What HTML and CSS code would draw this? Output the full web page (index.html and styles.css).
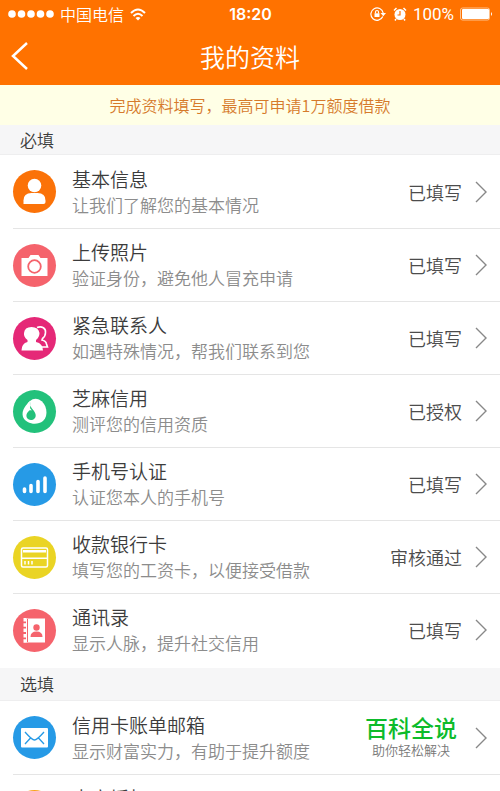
FILE: index.html
```html
<!DOCTYPE html>
<html lang="zh-CN">
<head>
  <meta charset="utf-8">
  <meta name="viewport" content="width=device-width, initial-scale=1">
  <link rel="stylesheet" href="styles.css">
  <title>我的资料</title>
</head>
<body>
  <div class="app">
    <header class="header">
      <div class="status">
        <div class="status-left">
          <svg width="46" height="10" viewBox="0 0 46 10" fill="#fff"><circle cx="4" cy="5" r="3.800"/><circle cx="13.500" cy="5" r="3.800"/><circle cx="23" cy="5" r="3.800"/><circle cx="32.500" cy="5" r="3.800"/><circle cx="42" cy="5" r="3.800"/></svg>
          <span>中国电信</span>
          <svg width="16" height="13" viewBox="0 0 16 13" fill="none" stroke="#fff" stroke-width="2"><path d="M1 5Q8-2 15 5M3.500 8Q8 3.500 12.500 8"/><path d="M8 12.500L5.500 10Q8 7.800 10.500 10z" fill="#fff" stroke="none"/></svg>
        </div>
        <span class="clock">18:20</span>
        <div class="status-right">
          <svg width="17" height="14" viewBox="0 0 17 14" fill="none" stroke="#fff" stroke-width="1.200"><path d="M12.800 9.500A6.200 6.200 0 1 1 13.200 6"/><path d="M10.500 6h5.500l-2.700 3.200z" fill="#fff" stroke="none"/><path d="M4.500 6.300h5V10h-5z" fill="#fff" stroke="none"/><path d="M5.500 6.500V5a1.500 1.500 0 0 1 3 0v1.500"/></svg>
          <svg width="14" height="14" viewBox="0 0 14 14"><circle cx="7" cy="7.500" r="5.500" fill="#fff"/><path d="M1 3.500L3.500 1M13 3.500L10.500 1M3 12l-1 1.500M11 12l1 1.500" stroke="#fff" stroke-width="1.500"/><path d="M7 4v4H4.500" fill="none" stroke="#ff7200" stroke-width="1.200"/></svg>
          <span class="percent">100%</span>
          <svg width="33" height="14" viewBox="0 0 33 14" fill="#fff"><rect x=".5" y="1" width="29" height="12" rx="2" fill="none" stroke="#ffc18b"/><rect x="2" y="2" width="27" height="10" rx="1"/><path d="M31 5q2 2 0 4z"/></svg>
        </div>
      </div>
      <div class="nav">
        <a class="back" href="#" aria-label="返回"><svg width="18" height="30" viewBox="0 0 18 30" fill="none" stroke="#fff" stroke-width="2.500"><path d="M16 2L2 15l14 13"/></svg></a>
        <h1>我的资料</h1>
      </div>
    </header>
    <p class="notice">完成资料填写，最高可申请1万额度借款</p>

    <h2 class="section">必填</h2>
    <ul class="list">
      <li><a class="row" href="#">
        <svg class="icon orange" viewBox="0 0 43 43"><circle cx="21.500" cy="15.500" r="6.800" fill="#fff"/><path d="M10.500 34v-3.500q0-7.500 8-7.500h6q8 0 8 7.500V32q0 2-2 2z" fill="#fff"/></svg>
        <span class="text"><span class="name">基本信息</span><span class="desc">让我们了解您的基本情况</span></span>
        <span class="state">已填写</span>
        <svg class="arrow" viewBox="0 0 12 22"><path d="M1 1l10 10L1 21"/></svg>
      </a></li>
      <li><a class="row" href="#">
        <svg class="icon coral" viewBox="0 0 43 43"><path d="M8.500 14h7l2-3h8l2 3h7v18h-26z" fill="#fff"/><circle cx="21.500" cy="22.500" r="6.300" fill="#fff" stroke="#f5636c" stroke-width="1.800"/></svg>
        <span class="text"><span class="name">上传照片</span><span class="desc">验证身份，避免他人冒充申请</span></span>
        <span class="state">已填写</span>
        <svg class="arrow" viewBox="0 0 12 22"><path d="M1 1l10 10L1 21"/></svg>
      </a></li>
      <li><a class="row" href="#">
        <svg class="icon pink" viewBox="0 0 43 43"><path d="M24 10.500c5-2 9 1 8.500 5 0 3-1 4.500-3 6l-.5 1.500q4 1 4.500 4l1 3h-6" fill="none" stroke="#fff" stroke-width="1.600"/><path d="M8.500 33.500q0-7 6-8.500v-2q-4-3-3.500-7 .5-6 7.500-6t8 6q0 4-3.500 7v2q7 1.500 7 8.500z" fill="#fff"/></svg>
        <span class="text"><span class="name">紧急联系人</span><span class="desc">如遇特殊情况，帮我们联系到您</span></span>
        <span class="state">已填写</span>
        <svg class="arrow" viewBox="0 0 12 22"><path d="M1 1l10 10L1 21"/></svg>
      </a></li>
      <li><a class="row" href="#">
        <svg class="icon green" viewBox="0 0 43 43"><path d="M17 11Q21 7.500 26 9.500c8 4 10 16 4 21.500-6 5-17 3-20-4-2-7 3-12 7-16z" fill="#fff"/><path d="M17 11c-1 7 4 8 5.500 13 1 4-2 6-4.500 6-4 0-6-4.500-3.500-7.500 3-3 3-5 2.500-11.500z" fill="#23c17b"/><path d="M17 10.500c-2 5-.5 7.500 2 10-3-1-6 1-6 4-2-3 0-10 4-14z" fill="#fff"/></svg>
        <span class="text"><span class="name">芝麻信用</span><span class="desc">测评您的信用资质</span></span>
        <span class="state">已授权</span>
        <svg class="arrow" viewBox="0 0 12 22"><path d="M1 1l10 10L1 21"/></svg>
      </a></li>
      <li><a class="row" href="#">
        <svg class="icon blue" viewBox="0 0 43 43" stroke="#fff" stroke-width="3.600" stroke-linecap="round"><path d="M11.500 26v2.500M18 22.500v6M25 18.500v10M32 15v13.500"/></svg>
        <span class="text"><span class="name">手机号认证</span><span class="desc">认证您本人的手机号</span></span>
        <span class="state">已填写</span>
        <svg class="arrow" viewBox="0 0 12 22"><path d="M1 1l10 10L1 21"/></svg>
      </a></li>
      <li><a class="row" href="#">
        <svg class="icon yellow" viewBox="0 0 43 43"><rect x="8.500" y="12" width="26" height="19" rx="1.500" fill="none" stroke="#fff" stroke-width="1.500"/><path d="M10 14h23v2.500H10zM9 21.500h25V23H9z" fill="#fff"/><path d="M12 25v3.500M15.500 25v3.500M19 25v3.500" stroke="#fff" stroke-width="1.500"/></svg>
        <span class="text"><span class="name">收款银行卡</span><span class="desc">填写您的工资卡，以便接受借款</span></span>
        <span class="state">审核通过</span>
        <svg class="arrow" viewBox="0 0 12 22"><path d="M1 1l10 10L1 21"/></svg>
      </a></li>
      <li><a class="row" href="#">
        <svg class="icon coral" viewBox="0 0 43 43"><path d="M13 9.500h19v24H13z" fill="#fff"/><path d="M12 9v25" stroke="#fff" stroke-width="3" stroke-dasharray="3.500 1.800"/><path d="M14.500 10v23" stroke="#f5636c"/><circle cx="23.500" cy="18.500" r="3.200" fill="#f5636c"/><path d="M17.500 28q0-5.500 6-5.500t6 5.500z" fill="#f5636c"/></svg>
        <span class="text"><span class="name">通讯录</span><span class="desc">显示人脉，提升社交信用</span></span>
        <span class="state">已填写</span>
        <svg class="arrow" viewBox="0 0 12 22"><path d="M1 1l10 10L1 21"/></svg>
      </a></li>
    </ul>

    <h2 class="section">选填</h2>
    <ul class="list">
      <li><a class="row" href="#">
        <svg class="icon blue" viewBox="0 0 43 43"><rect x="8" y="12" width="27" height="19.500" rx="1" fill="#fff"/><path d="M12 16q7 8 9.500 8t9.500-8M12 28l5.500-6M31 28l-5.500-6" fill="none" stroke="#269ae6" stroke-width="1.300"/></svg>
        <span class="text"><span class="name">信用卡账单邮箱</span><span class="desc">显示财富实力，有助于提升额度</span></span>
        <span class="brand"><strong>百科全说</strong><small>助你轻松解决</small></span>
        <svg class="arrow" viewBox="0 0 12 22"><path d="M1 1l10 10L1 21"/></svg>
      </a></li>
      <li><a class="row" href="#">
        <svg class="icon amber" viewBox="0 0 43 43"><path d="M11 16h21l-2 12H14z" fill="#fff"/></svg>
        <span class="text"><span class="name">电商授权</span><span class="desc"></span></span>
        <svg class="arrow" viewBox="0 0 12 22"><path d="M1 1l10 10L1 21"/></svg>
      </a></li>
    </ul>
  </div>
</body>
</html>
```
FILE: styles.css
```css
* {
  box-sizing: border-box;
}
body {
  margin: 0;
  font-family: "Noto Sans CJK SC", sans-serif;
  font-weight: 350;
  color: #3c3c3c;
  background-color: #fff;
}
h1, h2, p, ul {
  margin: 0;
  padding: 0;
  font-weight: 350;
}
ul {
  list-style: none;
}
a {
  color: inherit;
  text-decoration: none;
}
svg {
  display: block;
  flex: none;
}
.app {
  height: 100vh;
  overflow: hidden;
}

/* header */
.header {
  color: #fff;
  background-color: #ff7200;
}
.status {
  display: grid;
  grid-template-columns: 1fr auto 1fr;
  align-items: center;
  height: 28px;
  padding: 0 7px 0 8px;
  font-size: 16px;
  line-height: 28px;
}
.status-left, .status-right {
  display: flex;
  align-items: center;
  gap: 6px;
}
.status-right {
  justify-content: flex-end;
}
.percent {
  font-family: Roboto, sans-serif;
  font-size: 17px;
  font-weight: 400;
}
.clock {
  font-family: Inter, sans-serif;
  font-weight: 600;
}
.nav {
  display: grid;
  grid-template-columns: 48px 1fr 48px;
  align-items: center;
  height: 57px;
  padding-bottom: 2px;
}
.back {
  padding-left: 11px;
}
.nav h1 {
  font-size: 25px;
  line-height: 54px;
  text-align: center;
}
.notice {
  font-size: 16px;
  line-height: 40px;
  text-align: center;
  color: #d67a2b;
  background-color: #ffffe6;
}

/* list */
.section {
  padding-left: 20px;
  font-size: 17px;
  line-height: 29px;
  border-bottom: 1px solid #eeeeef;
  background-color: #f6f6f7;
}
.list {
  padding-bottom: 2px;
}
.list + .section {
  line-height: 32px;
}
.row {
  display: flex;
  align-items: center;
  height: 73px;
  margin-left: 13px;
  padding-right: 13px;
}
li + li .row {
  border-top: 1px solid #e5e5e5;
}
.icon {
  width: 43px;
  height: 43px;
  margin-right: 16px;
  border-radius: 50%;
  fill: none;
}
.orange { background-color: #fb7208; }
.coral { background-color: #f5636c; }
.pink { background-color: #e52877; }
.green { background-color: #23c17b; }
.blue { background-color: #269ae6; }
.yellow { background-color: #ead424; }
.amber { background-color: #f9a11b; }
.text {
  display: flex;
  flex: 1;
  flex-direction: column;
}
.name {
  font-size: 19px;
  line-height: 26px;
}
.desc {
  min-height: 26px;
  font-size: 17px;
  line-height: 26px;
  color: #8c8c8c;
}
.state {
  font-size: 18px;
  color: #4c4c4c;
}
.arrow {
  width: 12px;
  height: 22px;
  margin-left: 13px;
  fill: none;
  stroke: #888;
  stroke-width: 1.4;
}
.brand {
  display: flex;
  flex-direction: column;
  align-items: center;
  margin-right: 5px;
  padding-bottom: 4px;
}
.brand strong {
  font-size: 23px;
  line-height: 28px;
  font-weight: 500;
  color: #0dbb2b;
}
.brand small {
  font-size: 13px;
  line-height: 18px;
  color: #777;
}
```
